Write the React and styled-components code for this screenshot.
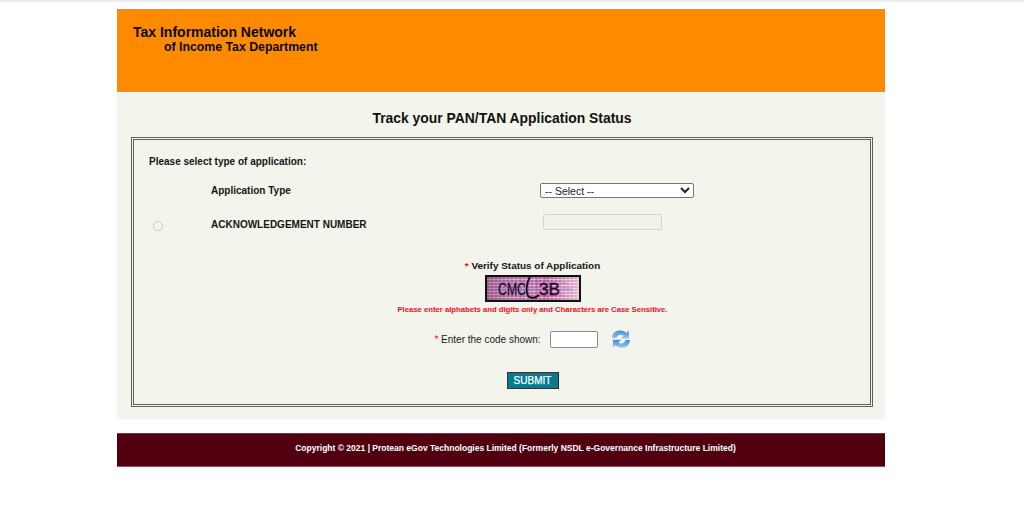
import React from 'react';
import styled, { createGlobalStyle } from 'styled-components';

const GlobalStyle = createGlobalStyle`
    html, body {
        margin: 0;
        padding: 0;
        background: #fff;
        font-family: "Liberation Sans", Arial, sans-serif;
    }
`;

const Page = styled.div`
    width: 1024px;
    height: 526px;
    overflow: hidden;
    border-top: 2px solid #ececec;
    box-sizing: border-box;
    padding-top: 7px;
`;

const Wrapper = styled.div`
    width: 768px;
    margin-left: 117px;
`;

const Header = styled.div`
    height: 83px;
    background: #ff8a00;
    box-sizing: border-box;
    padding: 16px 0 0 16px;
    color: #0a0a0a;
    font-weight: bold;
`;

const HeaderLine = styled.div`
    font-size: ${props => props.size}px;
    line-height: 15px;
    padding-left: ${props => props.indent || 0}px;
`;

const Content = styled.div`
    height: 327px;
    background: #f3f4eb;
    box-sizing: border-box;
    padding: 17px 12px 12px 14px;
`;

const PageTitle = styled.h1`
    margin: 0;
    height: 28px;
    font-size: 13.9px;
    line-height: 18px;
    font-weight: bold;
    text-align: center;
    color: #111;
`;

const FormBox = styled.div`
    height: 270px;
    box-sizing: border-box;
    border: 3px double #5f6058;
    padding: 15px 16px 0 15px;
`;

const SectionLabel = styled.div`
    font-size: 10px;
    line-height: 14px;
    font-weight: bold;
    color: #151515;
`;

const FormRow = styled.div`
    display: grid;
    grid-template-columns: 62px 329px 1fr;
    align-items: center;
    height: ${props => props.height}px;
    margin-top: ${props => props.top}px;
`;

const RowLabel = styled.div`
    font-size: 10px;
    font-weight: bold;
    color: #151515;
`;

const Select = styled.select`
    width: 154px;
    height: 15px;
    padding: 0 0 2px 0;
    font-family: "Liberation Sans", Arial, sans-serif;
    font-size: 10.5px;
    color: #222;
    background: #fff;
    border: 1px solid #77776f;
    border-radius: 2px;
`;

const Radio = styled.input`
    width: 10px;
    height: 10px;
    margin: 3px 0 0 4px;
    accent-color: #cfd0c8;
`;

const TextInput = styled.input`
    width: 119px;
    height: 16px;
    box-sizing: border-box;
    margin: 0 0 4px 3px;
    background: #f1f2ea;
    border: 1px solid #d3d4cc;
    border-radius: 2px;
`;

const Verify = styled.div`
    display: flex;
    flex-direction: column;
    align-items: center;
    margin-top: 27px;
    padding-left: 62px;
`;

const VerifyTitle = styled.div`
    font-size: 9.95px;
    line-height: 14px;
    font-weight: bold;
    color: #151515;
`;

const Star = styled.span`
    color: #e01010;
`;

const CaptchaFrame = styled.div`
    width: 96px;
    height: 27px;
    margin-top: 2px;
    box-sizing: border-box;
    border: 2px solid #111;
    line-height: 0;
`;

const Warning = styled.div`
    margin-top: 3px;
    font-size: 7.7px;
    line-height: 10px;
    font-weight: bold;
    color: #fb0a14;
`;

const CodeRow = styled.div`
    display: flex;
    align-items: center;
    margin-top: 15px;
    height: 18px;
`;

const CodeLabel = styled.span`
    font-size: 10px;
    color: #1a1a1a;
`;

const CodeInput = styled.input`
    width: 48px;
    height: 17px;
    box-sizing: border-box;
    margin: 0 13px 0 9px;
    background: #fff;
    border: 1px solid #8b8b85;
    border-radius: 2px;
`;

const SubmitButton = styled.button`
    width: 52px;
    height: 17px;
    margin-top: 24px;
    padding: 0;
    box-sizing: border-box;
    background: #037b92;
    color: #fff;
    border: 1px solid #333;
    border-right-color: #222;
    font-family: "Liberation Sans", Arial, sans-serif;
    font-size: 10px;
    font-weight: normal;
    -webkit-text-stroke: 0.25px #fff;
`;

const Footer = styled.div`
    height: 34px;
    margin-top: 14px;
    background: #52000f;
    border-top: 1px solid #84303f;
    border-bottom: 1px solid #9c4f5c;
    box-sizing: border-box;
    display: flex;
    align-items: center;
    justify-content: center;
    font-size: 8.5px;
    font-weight: bold;
    color: #fff;
    padding: 0 0 5px 29px;
`;

function Captcha() {
    return (
        <svg width="92" height="23" viewBox="0 0 92 23">
            <defs>
                <pattern id="noise" width="4" height="3" patternUnits="userSpaceOnUse">
                    <rect width="4" height="3" fill="#d07aa8" />
                    <rect width="2" height="3" fill="#b8518c" />
                    <rect y="2" width="4" height="1" fill="#e8b4d0" />
                </pattern>
                <linearGradient id="fade" x1="0" x2="1" y1="0" y2="0">
                    <stop offset="0" stopColor="#6a4a78" stopOpacity="0.45" />
                    <stop offset="0.65" stopColor="#ffffff" stopOpacity="0" />
                    <stop offset="1" stopColor="#ffffff" stopOpacity="0.55" />
                </linearGradient>
            </defs>
            <rect width="92" height="23" fill="url(#noise)" />
            <rect width="92" height="23" fill="url(#fade)" />
            <path d="M10 6H80M6 12H86M10 18H76" stroke="#6f86e0" strokeWidth="0.8" opacity="0.8" />
            <path d="M34 1V22M42 1V22M50 1V22M58 1V22" stroke="#5f66c8" strokeWidth="0.8" opacity="0.7" />
            <text x="11" y="18" fontFamily="Liberation Sans" fontSize="17" fill="#1e0a28" stroke="#1e0a28" strokeWidth="0.3" textLength="28" lengthAdjust="spacingAndGlyphs">CMC</text>
            <path d="M43 0C39 6 39 15 41 19C44 22 49 21 52 18" fill="none" stroke="#16081f" strokeWidth="1.8" />
            <text x="52" y="18" fontFamily="Liberation Sans" fontSize="17" fill="#1e0a28" stroke="#1e0a28" strokeWidth="0.3" textLength="21" lengthAdjust="spacingAndGlyphs">3B</text>
        </svg>
    );
}

function RefreshIcon() {
    return (
        <svg width="20" height="20" viewBox="0 0 20 20">
            <defs>
                <linearGradient id="arrow" x1="0" x2="0" y1="0" y2="1">
                    <stop offset="0" stopColor="#3f8fd6" />
                    <stop offset="1" stopColor="#9cc6ec" />
                </linearGradient>
            </defs>
            <path d="M1 9C1 4 5 1.500 9.500 1.500C12 1.500 14 2.500 15.500 4L18 1.500V9.500H10L12.500 7C11.500 6 10.500 5.800 9.500 5.800C7.500 5.800 6 7.200 5.500 9Z" fill="url(#arrow)" />
            <path d="M19 11C19 16 15 18.800 10.500 18.800C8 18.800 6 17.800 4.500 16.300L2 18.800V10.800H10L7.500 13.300C8.500 14.200 9.500 14.500 10.500 14.500C12.500 14.500 14 13 14.500 11Z" fill="url(#arrow)" />
        </svg>
    );
}

function App() {
    return (
        <Page>
            <GlobalStyle />
            <Wrapper>
                <Header>
                    <HeaderLine size={14}>Tax Information Network</HeaderLine>
                    <HeaderLine size={12.3} indent={31}>of Income Tax Department</HeaderLine>
                </Header>
                <Content>
                    <PageTitle>Track your PAN/TAN Application Status</PageTitle>
                    <FormBox>
                        <SectionLabel>Please select type of application:</SectionLabel>
                        <FormRow height={16} top={13}>
                            <span />
                            <RowLabel>Application Type</RowLabel>
                            <Select defaultValue="">
                                <option value="">-- Select --</option>
                            </Select>
                        </FormRow>
                        <FormRow height={18} top={16}>
                            <Radio type="radio" disabled />
                            <RowLabel>ACKNOWLEDGEMENT NUMBER</RowLabel>
                            <TextInput type="text" disabled />
                        </FormRow>
                        <Verify>
                            <VerifyTitle><Star>*</Star> Verify Status of Application</VerifyTitle>
                            <CaptchaFrame><Captcha /></CaptchaFrame>
                            <Warning>Please enter alphabets and digits only and Characters are Case Sensitive.</Warning>
                            <CodeRow>
                                <CodeLabel><Star>*</Star> Enter the code shown:</CodeLabel>
                                <CodeInput type="text" />
                                <RefreshIcon />
                            </CodeRow>
                            <SubmitButton type="button">SUBMIT</SubmitButton>
                        </Verify>
                    </FormBox>
                </Content>
                <Footer>Copyright © 2021 | Protean eGov Technologies Limited (Formerly NSDL e-Governance Infrastructure Limited)</Footer>
            </Wrapper>
        </Page>
    );
}

export default App;
